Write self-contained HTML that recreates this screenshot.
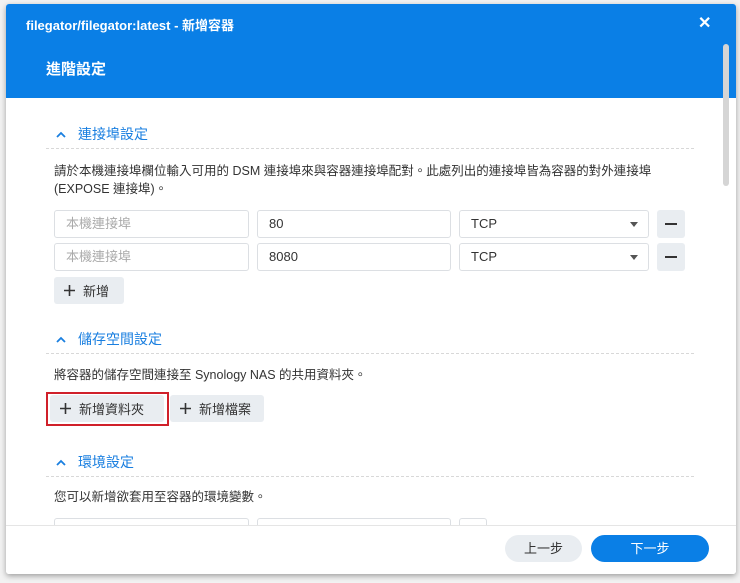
<!DOCTYPE html>
<html><head><meta charset="utf-8"><style>
*{box-sizing:border-box;margin:0;padding:0}
body{width:740px;height:583px;background:#f2f2f2;font-family:"Liberation Sans","Noto Sans CJK TC",sans-serif;position:relative;overflow:hidden;color:#333}
.dlg{position:absolute;left:6px;top:4px;width:730px;height:570px;background:#fff;box-shadow:0 2px 6px rgba(0,0,0,.35);border-radius:3px;overflow:hidden}
.hd{position:absolute;left:0;top:0;width:730px;height:94px;background:#0a7fe6;color:#fff}
.t1{position:absolute;left:20px;top:11px;font-size:13px;font-weight:bold}
.x{position:absolute;left:692px;top:9px;font-size:16px;font-weight:bold}
.t2{position:absolute;left:40px;top:54px;font-size:15px;font-weight:bold}
.sb{position:absolute;left:717px;top:40px;width:6px;height:142px;background:#d5d5d5;border-radius:3px}
.a{position:absolute}
.h{font-size:14px;color:#1a7fe0;display:flex;align-items:center}
.h svg{margin-right:12px}
.ln{position:absolute;left:40px;width:648px;border-top:1px dashed #d8d8d8}
.tx{font-size:12.5px;color:#333;line-height:18px}
.in{position:absolute;height:28px;border:1px solid #dcdfe3;border-radius:3px;font-size:13px;padding:0 11px;line-height:26px}
.ph{color:#aaa}
.btn{position:absolute;background:#e9edf1;border-radius:3px;font-size:13px;padding:0 10px;height:27px;display:flex;align-items:center}
.btn svg{margin-right:8px}
.mn{position:absolute;width:28px;height:28px;background:#e9edf1;border-radius:3px}
.mn:after{content:"";position:absolute;left:8px;top:13px;width:12px;height:2px;background:#333}
.ar{position:absolute;right:10px;top:11px;border-left:4px solid transparent;border-right:4px solid transparent;border-top:5px solid #555}
.ft{position:absolute;left:0;top:521px;width:730px;border-top:1px solid #e5e5e5}
.pb{position:absolute;height:27px;border-radius:14px;font-size:13px;text-align:center;line-height:27px}
</style></head><body>
<div class="dlg">
<div class="hd"><div class="t1">filegator/filegator:latest - 新增容器</div><div class="x">✕</div><div class="t2">進階設定</div></div>
<div class="sb"></div>
<div class="a h" style="left:50px;top:120px"><svg width="10" height="7" viewBox="0 0 10 7"><path d="M1 6L5 2L9 6" stroke="#1a7fe0" stroke-width="1.8" fill="none"/></svg>連接埠設定</div>
<div class="ln" style="top:144px"></div>
<div class="a tx" style="left:48px;top:158px">請於本機連接埠欄位輸入可用的 DSM 連接埠來與容器連接埠配對。此處列出的連接埠皆為容器的對外連接埠<br>(EXPOSE 連接埠)。</div>
<div class="in ph" style="left:48px;top:206px;width:195px">本機連接埠</div>
<div class="in" style="left:251px;top:206px;width:194px">80</div>
<div class="in" style="left:453px;top:206px;width:190px">TCP<span class="ar"></span></div>
<div class="mn" style="left:651px;top:206px"></div>
<div class="in ph" style="left:48px;top:239px;width:195px">本機連接埠</div>
<div class="in" style="left:251px;top:239px;width:194px">8080</div>
<div class="in" style="left:453px;top:239px;width:190px">TCP<span class="ar"></span></div>
<div class="mn" style="left:651px;top:239px"></div>
<div class="btn" style="left:48px;top:273px;width:70px"><svg width="11" height="11"><path d="M5.5 0V11M0 5.5H11" stroke="#333" stroke-width="1.6"/></svg>新增</div>
<div class="a h" style="left:50px;top:325px"><svg width="10" height="7" viewBox="0 0 10 7"><path d="M1 6L5 2L9 6" stroke="#1a7fe0" stroke-width="1.8" fill="none"/></svg>儲存空間設定</div>
<div class="ln" style="top:349px"></div>
<div class="a tx" style="left:48px;top:362px">將容器的儲存空間連接至 Synology NAS 的共用資料夾。</div>
<div class="a" style="left:40px;top:388px;width:123px;height:34px;border:2px solid #d0202a"></div>
<div class="btn" style="left:44px;top:391px;width:114px"><svg width="11" height="11"><path d="M5.5 0V11M0 5.5H11" stroke="#333" stroke-width="1.6"/></svg>新增資料夾</div>
<div class="btn" style="left:164px;top:391px;width:94px"><svg width="11" height="11"><path d="M5.5 0V11M0 5.5H11" stroke="#333" stroke-width="1.6"/></svg>新增檔案</div>
<div class="a h" style="left:50px;top:448px"><svg width="10" height="7" viewBox="0 0 10 7"><path d="M1 6L5 2L9 6" stroke="#1a7fe0" stroke-width="1.8" fill="none"/></svg>環境設定</div>
<div class="ln" style="top:472px"></div>
<div class="a tx" style="left:48px;top:484px">您可以新增欲套用至容器的環境變數。</div>
<div class="in" style="left:48px;top:514px;width:195px"></div>
<div class="in" style="left:251px;top:514px;width:194px"></div>
<div class="in" style="left:453px;top:514px;width:28px"></div>
<div class="ft" style="height:60px;background:#fff"></div>
<div class="pb" style="left:499px;top:531px;width:77px;background:#e9edf1;color:#333">上一步</div>
<div class="pb" style="left:585px;top:531px;width:118px;background:#0a7fe6;color:#fff">下一步</div>
</div>
</body></html>
